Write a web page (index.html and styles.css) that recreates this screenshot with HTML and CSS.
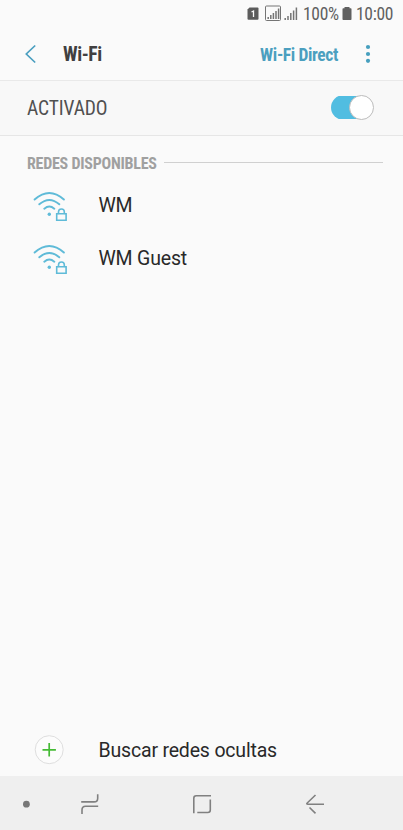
FILE: index.html
```html
<!DOCTYPE html>
<html lang="es">
<head>
<meta charset="utf-8">
<title>Wi-Fi</title>
<link rel="stylesheet" href="styles.css">
</head>
<body>
<div class="screen">
  <div class="status">
    <svg class="signals" width="53" height="28" viewBox="246 0 53 28">
      <path d="M249.500 7.500H257.500Q258.500 7.500 258.500 8.500V18.800Q258.500 19.800 257.500 19.800H248.500Q247.500 19.800 247.500 18.800V9.500Z" fill="#5c5c5c"/>
      <path d="M251.500 12L253.500 11V17" fill="none" stroke="#fafafa" stroke-width="1.300"/>
      <rect x="265.500" y="6" width="15" height="14.500" rx="1" fill="none" stroke="#747474"/>
      <path d="M268.200 19V17M270.800 19V15M273.400 19V13M276 19V11M278.600 19V8.500" stroke="#747474" stroke-width="1.500"/>
      <path d="M285.200 20V18M288 20V16M290.800 20V13M293.600 20V10.500M296.400 20V7.500" stroke="#747474" stroke-width="1.500"/>
    </svg>
    <span class="percent">100%</span>
    <svg class="battery" width="10" height="28" viewBox="342 0 10 28"><path d="M344.500 7H349.500V8.300H350.700Q351.500 8.300 351.500 9.100V19.200Q351.500 20 350.700 20H343.300Q342.500 20 342.500 19.200V9.100Q342.500 8.300 343.300 8.300H344.500Z" fill="#606060"/></svg>
    <span class="clock">10:00</span>
  </div>
  <header class="header">
    <svg class="back" width="14" height="20" viewBox="0 0 14 20"><path d="M11.200 1.500L2.300 10L11.200 18.500" fill="none" stroke="#4b9fc0" stroke-width="1.700"/></svg>
    <h1 class="title">Wi-Fi</h1>
    <span class="direct">Wi-Fi Direct</span>
    <svg class="more" width="6" height="20" viewBox="0 0 6 20" fill="#469fbe"><circle cx="3" cy="3" r="2.100"/><circle cx="3" cy="10" r="2.100"/><circle cx="3" cy="16.800" r="2.100"/></svg>
  </header>
  <section class="toggle-row">
    <span class="state">ACTIVADO</span>
    <span class="switch"><span class="knob"></span></span>
  </section>
  <main class="content">
    <div class="section"><span class="section-label">REDES DISPONIBLES</span><span class="rule"></span></div>
    <div class="row">
      <svg class="wifi" width="36" height="32" viewBox="0 0 36 32" fill="none" stroke="#5fbbd8" stroke-width="1.900" stroke-linecap="round"><path d="M2.600 9.500Q17.300-3.700 31.900 9.500M7.300 14.300Q17.300 5.500 27.300 14.300M12.300 18.700Q17.300 14.500 22.300 18.700"/><circle cx="17.300" cy="24.300" r="1.700" fill="#5fbbd8" stroke="none"/><path d="M24.700 23.800H34.100V30.300H24.700Z" stroke-width="1.600" stroke-linecap="butt"/><path d="M26.500 23.500V21.700Q26.700 19 29.500 19T32.300 21.700V23.500" stroke-width="1.600"/></svg>
      <span class="name">WM</span>
    </div>
    <div class="row">
      <svg class="wifi" width="36" height="32" viewBox="0 0 36 32" fill="none" stroke="#5fbbd8" stroke-width="1.900" stroke-linecap="round"><path d="M2.600 9.500Q17.300-3.700 31.900 9.500M7.300 14.300Q17.300 5.500 27.300 14.300M12.300 18.700Q17.300 14.500 22.300 18.700"/><circle cx="17.300" cy="24.300" r="1.700" fill="#5fbbd8" stroke="none"/><path d="M24.700 23.800H34.100V30.300H24.700Z" stroke-width="1.600" stroke-linecap="butt"/><path d="M26.500 23.500V21.700Q26.700 19 29.500 19T32.300 21.700V23.500" stroke-width="1.600"/></svg>
      <span class="name">WM Guest</span>
    </div>
  </main>
  <div class="hidden-networks">
    <svg class="add" width="30" height="30" viewBox="0 0 30 30"><circle cx="15.200" cy="14.700" r="14" fill="#fcfcfc" stroke="#dedede"/><path d="M8.500 14.800H21.900M15.200 8.100V21.500" stroke="#45bb35" stroke-width="1.700"/></svg>
    <span class="name">Buscar redes ocultas</span>
  </div>
  <nav class="navbar">
    <svg width="403" height="54" viewBox="0 776 403 54" fill="none" stroke="#808080" stroke-width="1.600">
      <circle cx="26.400" cy="804.200" r="3.400" fill="#777" stroke="none"/>
      <path d="M97.700 794.300V798.200Q97.700 801.900 94 801.900H81.200M98.200 806.300H85.500Q82 806.300 82 810V814"/>
      <path d="M193.800 813.300V798.200Q193.800 795.800 196.200 795.800H211M210.300 799.500V810Q210.300 812.500 207.800 812.500H197.300"/>
      <path d="M315.500 795L307.200 803Q306 804.200 308 804.200H324M309.500 807.500L315.500 813.300"/>
    </svg>
  </nav>
</div>
</body>
</html>
```
FILE: styles.css
```css
* { box-sizing: border-box; }
body { margin: 0; background: #fafafa; font-family: Roboto, "Liberation Sans", sans-serif; }
.screen { width: 403px; height: 830px; display: flex; flex-direction: column; overflow: hidden; }
svg { display: block; flex: none; }
.status, .title, .direct, .state, .section-label { font-family: "Roboto Condensed", Roboto, sans-serif; font-stretch: 75%; white-space: nowrap; }
.status { height: 28px; display: flex; align-items: center; padding-left: 246px; color: #606060; font-size: 17.5px; letter-spacing: -0.3px; }
.percent { width: 36px; margin-left: 4px; }
.battery { margin-left: 3px; }
.clock { margin-left: 4px; }
.header { height: 53px; display: flex; align-items: center; padding: 0 32px 0 24px; border-bottom: 1px solid #e9e9e9; }
.title { margin: 1px 0 0 25px; font-size: 19.5px; font-weight: 700; letter-spacing: -0.4px; color: #404040; }
.direct { margin: 1px 27px 0 auto; font-size: 17.5px; font-weight: 700; letter-spacing: -0.37px; color: #4b9fbf; }
.toggle-row { height: 55px; display: flex; align-items: center; justify-content: space-between; padding: 0 29px 0 27px; background: #f8f8f8; border-bottom: 1px solid #e6e6e6; }
.state { margin-top: 1px; font-size: 19.5px; letter-spacing: -0.1px; color: #505050; }
.switch { width: 43px; height: 25px; margin-bottom: 1px; display: flex; align-items: center; justify-content: flex-end; background: linear-gradient(#51bde1, #51bde1) 0 1px / 34px 23px no-repeat; border-radius: 13px; }
.knob { width: 25px; height: 25px; border-radius: 50%; border: 1px solid #bcbcbc; background: #fff; }
.content { flex: 1; }
.section { height: 43px; display: flex; align-items: center; padding: 11px 20px 0 27px; }
.section-label { font-size: 16px; font-weight: 700; letter-spacing: -0.25px; color: #a0a0a0; }
.rule { flex: 1; height: 1px; margin: 0 0 1px 7px; background: #d0d0d0; }
.row { height: 53px; display: flex; align-items: center; padding-left: 32px; }
.wifi { margin-right: 30.5px; }
.name { font-size: 19.5px; letter-spacing: -0.18px; color: #292929; white-space: nowrap; }
.hidden-networks { height: 53px; display: flex; align-items: center; padding-left: 34px; }
.hidden-networks .name { margin-top: 2px; }
.add { margin-right: 34.5px; }
.navbar { height: 54px; background: #efefef; }
```
